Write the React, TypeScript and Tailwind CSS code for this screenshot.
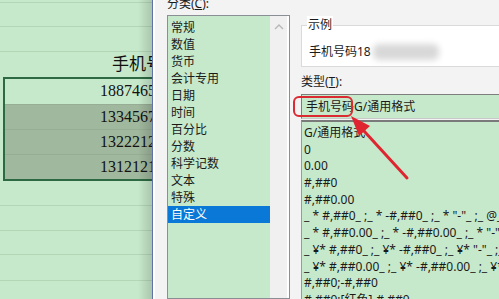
import React from 'react'

const categories = ['常规', '数值', '货币', '会计专用', '日期', '时间', '百分比', '分数', '科学记数', '文本', '特殊', '自定义']

const formats = [
  'G/通用格式',
  '0',
  '0.00',
  '#,##0',
  '#,##0.00',
  '_ * #,##0_ ;_ * -#,##0_ ;_ * "-"_ ;_ @_ ',
  '_ * #,##0.00_ ;_ * -#,##0.00_ ;_ * "-"??_ ;_ @_ ',
  '_ ¥* #,##0_ ;_ ¥* -#,##0_ ;_ ¥* "-"_ ;_ @_ ',
  '_ ¥* #,##0.00_ ;_ ¥* -#,##0.00_ ;_ ¥* "-"??_ ;_ @_ ',
  '#,##0;-#,##0',
  '#,##0;[红色]-#,##0',
]

const phones = ['18874651', '13345678', '13222123', '13121212']

const Sheet = () => {
  return (
    <div className="relative w-[152px] shrink-0 overflow-hidden bg-[#c7e9cb] font-['Liberation_Serif','Noto_Sans_CJK_SC',serif]">
      <div className="h-[3px] border-b border-[#b3d6b7]" />
      <div className="h-[24px] border-b border-[#b3d6b7]" />
      <div className="h-[25px] border-b border-[#b3d6b7]" />
      <div className="h-[25px] whitespace-nowrap pl-[112px] pt-[2px] text-[17px] leading-[22px] text-[#111]">手机号码</div>
      <div className="ml-[3px] w-[200px] border-2 border-[#2d6a43]">
        {phones.map((p, i) => (
          <div
            key={p}
            className={`h-[25px] whitespace-nowrap pl-[95px] pt-[1px] text-[16px] leading-[22px] text-[#111] ${
              i === 0 ? 'h-[23px] bg-[#c7e9cb]' : 'border-t border-[#97ae94] bg-[#a0b89d]'
            }`}
          >
            {p}
          </div>
        ))}
      </div>
      <div className="h-[25px] border-b border-[#b3d6b7]" />
      <div className="h-[25px] border-b border-[#b3d6b7]" />
      <div className="h-[24px] border-b border-[#b3d6b7]" />
      <div className="h-[26px] border-b border-[#b3d6b7]" />
      <div className="pointer-events-none absolute inset-y-0 right-0 w-[14px] bg-gradient-to-r from-transparent to-black/15" />
    </div>
  )
}

const App = () => {
  return (
    <div className="relative flex h-[299px] w-[499px] overflow-hidden bg-[#f3f3f3] font-['Noto_Sans','Noto_Sans_CJK_SC',sans-serif] text-[12px] text-[#1a1a1a]">
      <Sheet />
      <div className="w-px shrink-0 bg-[#5f73aa]" />
      <div className="w-[2px] shrink-0 bg-white" />

      <div className="flex flex-1 min-w-0">
        {/* 分类 */}
        <div className="flex w-[135px] shrink-0 flex-col pl-[12px]">
          <div className="-mt-[5px] h-[20px] leading-[18px]">
            分类(<span className="underline">C</span>):
          </div>
          <div className="flex flex-1 border border-[#8a8f96] bg-white">
            <div className="flex w-[102px] flex-col bg-[#c7e9cb] pt-[3px]">
              {categories.map((c) => (
                <div
                  key={c}
                  className={`h-[17px] shrink-0 pl-[3px] leading-[17px] ${c === '自定义' ? 'bg-[#0a78d6] text-white' : ''}`}
                >
                  {c}
                </div>
              ))}
            </div>
            <div className="flex w-[17px] justify-center bg-[#f0f0f0] pt-[8px]">
              <svg width="10" height="6" viewBox="0 0 10 6">
                <path d="M1 5 L5 1 L9 5" fill="none" stroke="#b8b8b8" strokeWidth="1.4" />
              </svg>
            </div>
          </div>
        </div>

        {/* 右侧 */}
        <div className="ml-[11px] flex min-w-0 flex-1 flex-col">
          <div className="h-[25px]" />
          <div className="relative h-[42px] border border-r-0 border-[#dadada] bg-white">
            <div className="absolute -top-[10px] left-[5px] bg-white px-[1px] leading-[18px]">示例</div>
            <div className="flex items-center pl-[7px] pt-[18px] leading-[16px]">
              <span>手机号码18</span>
              <div className="ml-[2px] h-[16px] w-[66px] rounded-[6px] bg-[#d8d8d8] blur-[3px]" />
            </div>
          </div>
          <div className="mt-[6px] h-[21px] leading-[18px]">
            类型(<span className="underline">T</span>):
          </div>
          <div className="h-[25px] whitespace-nowrap border-t border-l border-[#7d7d7d] border-b-[#c8c8c8] border-b bg-[#c7e9cb] pl-[4px] leading-[23px]">
            手机号码G/通用格式
          </div>
          <div className="mt-[1px] flex flex-1 flex-col overflow-hidden border-t-2 border-l border-[#7a7a7a] border-l-[#9a9a9a] bg-[#c7e9cb] pl-[2px] pt-[3px]">
            {formats.map((f) => (
              <div key={f} className="h-[16.7px] shrink-0 whitespace-pre leading-[16.7px]">
                {f}
              </div>
            ))}
          </div>
        </div>
      </div>

      {/* 标注 */}
      <div className="pointer-events-none absolute left-[293px] top-[96px] h-[21px] w-[60px] rounded-[6px] border-2 border-[#dc2a33]" />
      <svg className="pointer-events-none absolute left-0 top-0" width="499" height="299">
        <line x1="364" y1="131" x2="407" y2="178" stroke="#df2630" strokeWidth="3" strokeLinecap="round" />
        <polygon points="351,116 359,136 370,126" fill="#df2630" />
      </svg>
    </div>
  )
}

export default App
